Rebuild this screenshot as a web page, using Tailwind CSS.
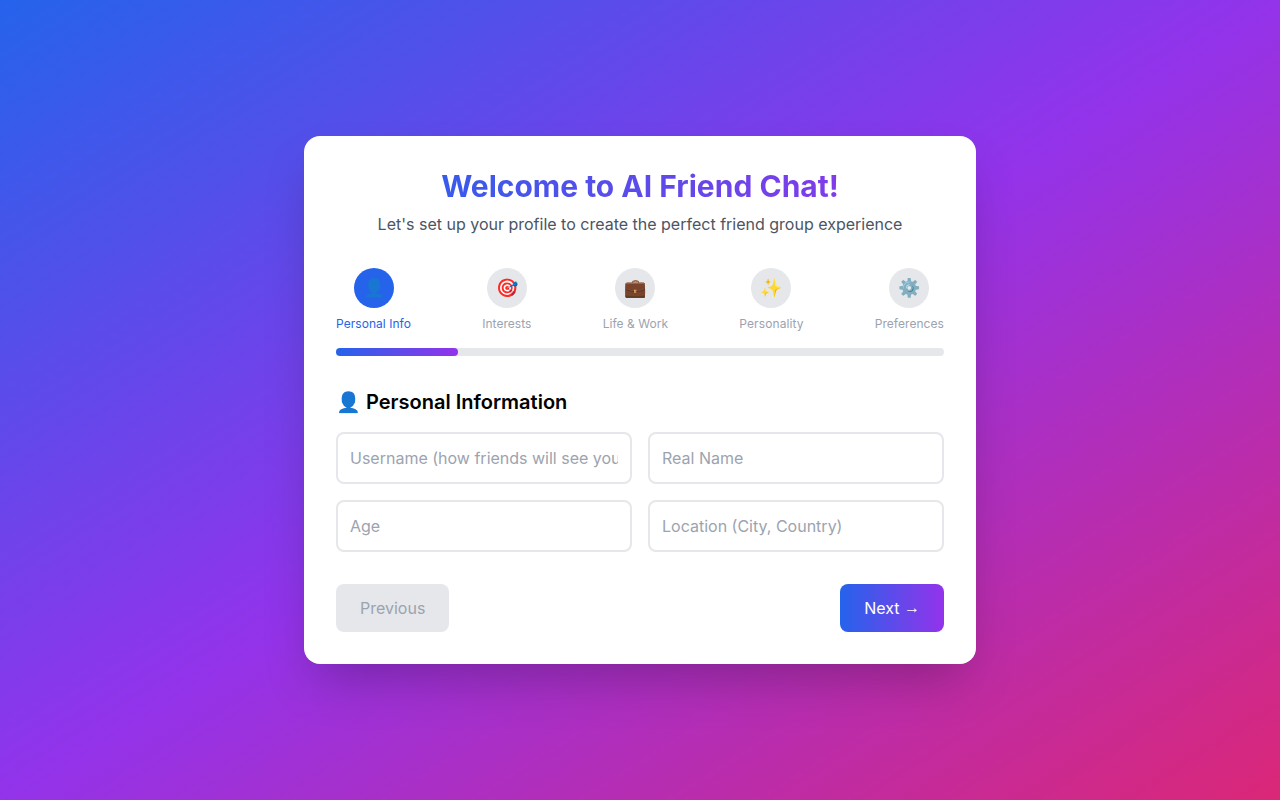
<!DOCTYPE html>
<html lang="en">
<head>
  <meta charset="UTF-8" />
  <title>AI Friend Chat</title>
  <script src="https://cdn.jsdelivr.net/npm/@tailwindcss/browser@4"></script>
</head>
<body class="font-['Inter',sans-serif]">
  <div class="min-h-screen flex items-center justify-center p-4 bg-[linear-gradient(to_bottom_right,#2563eb,#9333ea,#db2777)]">
    <div class="bg-white rounded-2xl shadow-2xl p-8 w-full max-w-2xl">
      <div class="text-center mb-8">
        <h1 class="text-3xl font-bold mb-2 bg-[linear-gradient(to_right,#2563eb,#9333ea)] bg-clip-text text-transparent">Welcome to AI Friend Chat!</h1>
        <p class="text-[#4b5563]">Let's set up your profile to create the perfect friend group experience</p>
      </div>

      <!-- Steps -->
      <div class="mb-8">
        <div class="flex justify-between mb-4">
          <div class="flex flex-col items-center">
            <div class="w-10 h-10 rounded-full flex items-center justify-center text-lg bg-[#2563eb] text-white mb-2">👤</div>
            <span class="text-xs tracking-[0.05px] text-[#2563eb]">Personal Info</span>
          </div>
          <div class="flex flex-col items-center">
            <div class="w-10 h-10 rounded-full flex items-center justify-center text-lg bg-[#e5e7eb] mb-2">🎯</div>
            <span class="text-xs tracking-[0.05px] text-[#9ca3af]">Interests</span>
          </div>
          <div class="flex flex-col items-center">
            <div class="w-10 h-10 rounded-full flex items-center justify-center text-lg bg-[#e5e7eb] mb-2">💼</div>
            <span class="text-xs tracking-[0.05px] text-[#9ca3af]">Life &amp; Work</span>
          </div>
          <div class="flex flex-col items-center">
            <div class="w-10 h-10 rounded-full flex items-center justify-center text-lg bg-[#e5e7eb] mb-2">✨</div>
            <span class="text-xs tracking-[0.1px] text-[#9ca3af]">Personality</span>
          </div>
          <div class="flex flex-col items-center">
            <div class="w-10 h-10 rounded-full flex items-center justify-center text-lg bg-[#e5e7eb] mb-2">⚙️</div>
            <span class="text-xs tracking-[0.05px] text-[#9ca3af]">Preferences</span>
          </div>
        </div>
        <div class="w-full bg-[#e5e7eb] rounded-full h-2">
          <div class="h-2 w-1/5 rounded-full bg-[linear-gradient(to_right,#2563eb,#9333ea)]"></div>
        </div>
      </div>

      <!-- Form -->
      <div class="mb-8">
        <h2 class="text-xl font-semibold mb-4">👤 Personal Information</h2>
        <div class="grid grid-cols-2 gap-4">
          <input type="text" placeholder="Username (how friends will see you)" class="w-full px-3 py-3 border-2 border-[#e5e7eb] rounded-lg outline-none placeholder:text-[#9ca3af]" />
          <input type="text" placeholder="Real Name" class="w-full px-3 py-3 border-2 border-[#e5e7eb] rounded-lg outline-none placeholder:text-[#9ca3af]" />
          <input type="text" placeholder="Age" class="w-full px-3 py-3 border-2 border-[#e5e7eb] rounded-lg outline-none placeholder:text-[#9ca3af]" />
          <input type="text" placeholder="Location (City, Country)" class="w-full px-3 py-3 border-2 border-[#e5e7eb] rounded-lg outline-none placeholder:text-[#9ca3af]" />
        </div>
      </div>

      <div class="flex justify-between">
        <button disabled class="px-6 py-3 rounded-lg bg-[#e5e7eb] text-[#9ca3af]">Previous</button>
        <button class="px-6 py-3 rounded-lg text-white bg-[linear-gradient(to_right,#2563eb,#9333ea)]">Next <span class="font-['Liberation_Sans',sans-serif] leading-none relative -top-px">→</span></button>
      </div>
    </div>
  </div>
</body>
</html>
